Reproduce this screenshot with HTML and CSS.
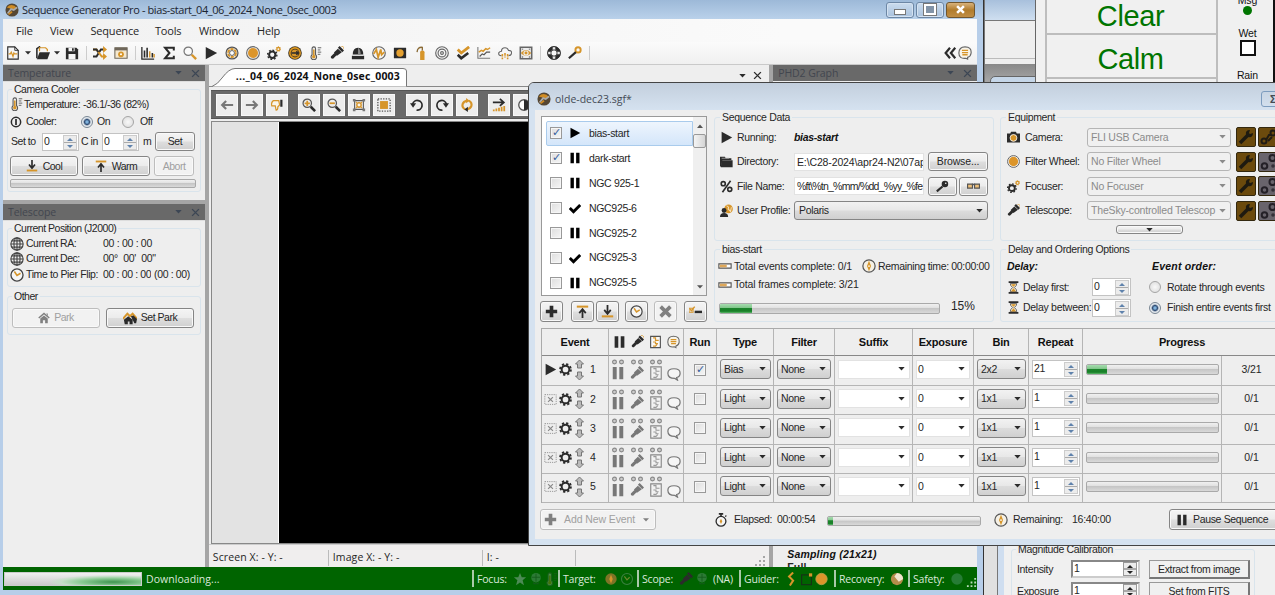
FILE: index.html
```html
<!DOCTYPE html>
<html lang="en">
<head>
<meta charset="utf-8">
<title>Sequence Generator Pro</title>
<link rel="stylesheet" href="styles.css">
</head>
<body>
<svg class="sprite" aria-hidden="true">
  <symbol id="new" viewBox="0 0 16 16"><path d="M2 1h8l4 4v10H2z" fill="#f6f6f6" stroke="currentColor" stroke-width="1.3"/><path d="M10 1v4h4" fill="none" stroke="currentColor"/><path d="M3 9h2l1-2 2 5 1-4 1 1h3" fill="none" stroke="#d6952a" stroke-width="1.4"/></symbol>
  <symbol id="open" viewBox="0 0 16 16"><path d="M1 14V3l3-2 1 2" fill="none" stroke="currentColor" stroke-width="1.8"/><path d="M4 6V2h7l2 2v2" fill="#f6f6f6" stroke="#d6952a" stroke-width="1.4"/><path d="M4 7h12l-3 8H1z" fill="currentColor"/></symbol>
  <symbol id="save" viewBox="0 0 16 16"><path d="M1 2h12l2 2v11H1z" fill="currentColor"/><path d="M4 2h7v4H4zM4 9h8v6H4z" fill="#f6f6f6"/><path d="M8 2.500h2v3H8z" fill="currentColor"/></symbol>
  <symbol id="shuffle" viewBox="0 0 16 16"><path d="M0 12h4l5-8h4" fill="none" stroke="currentColor" stroke-width="2.200"/><path d="M0 4h4l6 8h3" fill="none" stroke="#d6952a" stroke-width="2.200"/><path d="M0 4h4l2 3" fill="none" stroke="currentColor" stroke-width="2.200"/><path d="M11.500 0L16 4l-4.500 4z" fill="#d6952a"/><path d="M11.500 8l4.500 4-4.500 4z" fill="#d6952a"/></symbol>
  <symbol id="window" viewBox="0 0 16 16"><path d="M1 2h14v12H1z" fill="#f5e8ce" stroke="#6f675a" stroke-width="1.200"/><path d="M1 2h14v3H1z" fill="#6f675a"/><circle cx="8" cy="9.500" r="3.300" fill="#d6952a"/><circle cx="8" cy="9.500" r="1.200" fill="#fff"/></symbol>
  <symbol id="bars" viewBox="0 0 16 16"><path d="M1 1v14h14" fill="none" stroke="currentColor" stroke-width="1.500"/><path d="M4 13V5M7 13V2M13 13V8" stroke="currentColor" stroke-width="1.800"/><path d="M10 13V6M15 13V9" stroke="#d6952a" stroke-width="1.600"/></symbol>
  <symbol id="sigma" viewBox="0 0 16 16"><path d="M13.500 5V2H3.500l5 6-5 6h10v-3" fill="none" stroke="currentColor" stroke-width="2.300"/></symbol>
  <symbol id="search" viewBox="0 0 16 16"><circle cx="6" cy="6" r="4.800" fill="#fafafa" stroke="#777" stroke-width="1.400"/><path d="M10 10l5 5" stroke="#d6952a" stroke-width="2.700"/></symbol>
  <symbol id="play" viewBox="0 0 16 16"><path d="M2 1l13 7-13 7z" fill="currentColor"/></symbol>
  <symbol id="nut" viewBox="0 0 16 16"><circle cx="8" cy="8" r="6.800" fill="#eee" stroke="#555" stroke-width="1.400"/><circle cx="8" cy="8" r="4.500" fill="none" stroke="#d6952a" stroke-width="2.200" stroke-dasharray="3.700 1"/><circle cx="8" cy="8" r="2.800" fill="#fff" stroke="#555"/></symbol>
  <symbol id="ball" viewBox="0 0 16 16"><circle cx="8" cy="8" r="7.300" fill="#eee" stroke="#666" stroke-width="1.200"/><circle cx="8" cy="8" r="5.700" fill="#dc952a"/></symbol>
  <symbol id="gears" viewBox="0 0 16 16"><circle cx="6" cy="10" r="3.600" fill="none" stroke="currentColor" stroke-width="2.300"/><circle cx="6" cy="10" r="5.300" fill="none" stroke="currentColor" stroke-width="1.600" stroke-dasharray="2 2.100"/><circle cx="13" cy="3.500" r="1.800" fill="none" stroke="#d6952a" stroke-width="1.500"/><circle cx="13" cy="3.500" r="2.700" fill="none" stroke="#d6952a" stroke-dasharray="1.200 1"/></symbol>
  <symbol id="coin" viewBox="0 0 16 16"><circle cx="8" cy="8" r="7.800" fill="#3b3223"/><circle cx="8" cy="8" r="5.900" fill="none" stroke="#df991f" stroke-width="1.800"/><circle cx="8" cy="8" r="4" fill="#d6952a"/><path d="M4 8h8M9.500 6L12 8l-2.500 2" stroke="#2b2b2b" fill="none" stroke-width="1.500"/></symbol>
  <symbol id="thermo" viewBox="0 0 16 16"><path d="M3.500 10V3q0-2 2-2t2 2v7a3.200 3.200 0 1 1-4 0z" fill="#eee" stroke="#555" stroke-width="1.200"/><path d="M5.500 4v8" stroke="#d6952a" stroke-width="1.800"/><circle cx="5.500" cy="12.200" r="2" fill="#d6952a"/><path d="M10 2h4M10 4.500h3M10 7h4M10 9.500h3" stroke="#555"/></symbol>
  <symbol id="scope" viewBox="0 0 16 16"><path d="M1 12l4-4 2.500 2.500-4 4q-3 0-2.500-2.500zM4.500 7.500L9 3l4.500 4-5.500 4zM9 2l2-2 5 5-2 2z" fill="currentColor"/><path d="M12.500 0H14l2 2v1.500" stroke="#d6952a" fill="none"/></symbol>
  <symbol id="scopeg" viewBox="0 0 16 16"><path d="M1 12l4-4 2.500 2.500-4 4q-3 0-2.500-2.500zM4.500 7.500L9 3l4.500 4-5.500 4zM9 2l2-2 5 5-2 2z" fill="currentColor"/></symbol>
  <symbol id="dome" viewBox="0 0 16 16"><path d="M1 11h14v4H1zM2 10q0-8 6-8t6 8z" fill="currentColor"/><path d="M8 2q3 2 3 7H8z" fill="#888"/><path d="M2 10.400h12" stroke="#fff" stroke-width=".8"/></symbol>
  <symbol id="wave" viewBox="0 0 16 16"><circle cx="8" cy="8" r="7.200" fill="#f4f4f4" stroke="#666" stroke-width="1.300"/><path d="M2 9l3-5 2 9 3-9 1 6 3-3" fill="none" stroke="#d6952a" stroke-width="2"/></symbol>
  <symbol id="boxball" viewBox="0 0 16 16"><path d="M1 2h14v12H1z" fill="currentColor"/><circle cx="8" cy="8" r="4.200" fill="#e5a131"/></symbol>
  <symbol id="bottle" viewBox="0 0 16 16"><path d="M7 7q0-2 2-2h1q2 0 2 2v9H7z" fill="#d6952a"/><path d="M9.500 5V1.500Q4 1 3.500 7" fill="none" stroke="#8a6a35" stroke-width="1.500"/></symbol>
  <symbol id="target" viewBox="0 0 16 16"><g fill="none" stroke="#666" stroke-width="1.300"><circle cx="8" cy="8" r="7.200"/><circle cx="8" cy="8" r="4.500"/><circle cx="8" cy="8" r="1.600"/></g></symbol>
  <symbol id="checks" viewBox="0 0 16 16"><path d="M2 10l4 4 8-6" fill="none" stroke="currentColor" stroke-width="3"/><path d="M2 4l4 4 9-7" fill="none" stroke="#d6952a" stroke-width="3.200"/></symbol>
  <symbol id="chart" viewBox="0 0 16 16"><path d="M1 1v13h14" fill="none" stroke="#777" stroke-width="1.200"/><path d="M2 7l3-2 2 1 3-3 2 1 3-2" fill="none" stroke="#d6952a" stroke-width="1.700"/><path d="M3 12l3-3 2 1 3-3 4 0" fill="none" stroke="#555" stroke-width="1.400"/></symbol>
  <symbol id="cloud" viewBox="0 0 16 16"><path d="M4 11Q0 11 1 7.500 2 6 4 6q0-4 4-4 3 0 4 3 4 0 3.500 3.500Q15 11 12 11" fill="none" stroke="#666" stroke-width="1.300"/><path d="M5 9v6M8 8v5M11 9v6" stroke="#d6952a" stroke-width="1.800" stroke-dasharray="3 1"/></symbol>
  <symbol id="eye" viewBox="0 0 16 16"><path d="M1.500 1.500h13v13h-13z" fill="#eee" stroke="#666" stroke-width="1.800"/><path d="M2 8q6-7 12 0-6 7-12 0z" fill="#d6952a"/><circle cx="8" cy="8" r="3" fill="#eee"/><circle cx="8" cy="8" r="1.700" fill="#d6952a"/><path d="M4 3v1M12 3v1M4 12v1M12 12v1" stroke="#444" stroke-width="1.500"/></symbol>
  <symbol id="buoy" viewBox="0 0 16 16"><circle cx="8" cy="8" r="5.600" fill="#f8f8f8" stroke="currentColor" stroke-width="4"/><path d="M8 1v4M8 11v4M1 8h4M11 8h4" stroke="#e8e8e8" stroke-width="3"/><circle cx="8" cy="8" r="7.300" fill="none" stroke="currentColor"/><circle cx="8" cy="8" r="3.600" fill="none" stroke="currentColor"/></symbol>
  <symbol id="key" viewBox="0 0 16 16"><circle cx="11.500" cy="4.500" r="3" fill="none" stroke="#d6952a" stroke-width="2.200"/><path d="M9 7l-8 7" stroke="currentColor" stroke-width="2.500"/></symbol>
  <symbol id="chev" viewBox="0 0 16 16"><path d="M8 2L3 8l5 6M14 2L9 8l5 6" fill="none" stroke="currentColor" stroke-width="2.500"/></symbol>
  <symbol id="chat" viewBox="0 0 16 16"><path d="M9 14q-8 1-8-6 0-7 7-7 7.500 0 7 7-.5 4-4 5v2z" fill="#f8f4ea" stroke="#666" stroke-width="1.300"/><path d="M4.500 5h7M4.500 7.500h7M5 10h6" stroke="#d6952a" stroke-width="1.500"/></symbol>
  <symbol id="left" viewBox="0 0 16 16"><path d="M15 8H3M7 3.500L2.500 8 7 12.500" fill="none" stroke="#777" stroke-width="2.500"/></symbol>
  <symbol id="right" viewBox="0 0 16 16"><path d="M1 8h12M9 3.500L13.500 8 9 12.500" fill="none" stroke="#777" stroke-width="2.500"/></symbol>
  <symbol id="thumb" viewBox="0 0 16 16"><path d="M10 3H4Q1 5 2 9h4l1 5q2 0 2-4l2-2z" fill="#f8f4ea" stroke="#d6952a" stroke-width="1.400"/><path d="M13 2v8" stroke="currentColor" stroke-width="2.500"/></symbol>
  <symbol id="zin" viewBox="0 0 16 16"><circle cx="6" cy="6" r="4.800" fill="none" stroke="#555" stroke-width="1.400"/><path d="M3 6h6M6 3v6" stroke="#d6952a" stroke-width="2"/><path d="M10 10l5 5" stroke="currentColor" stroke-width="3"/></symbol>
  <symbol id="zout" viewBox="0 0 16 16"><circle cx="6" cy="6" r="4.800" fill="none" stroke="#555" stroke-width="1.400"/><path d="M3 6h6" stroke="#d6952a" stroke-width="2"/><path d="M10 10l5 5" stroke="currentColor" stroke-width="3"/></symbol>
  <symbol id="fit" viewBox="0 0 16 16"><path d="M3 3h10v10H3z" fill="none" stroke="#555" stroke-width="1.200"/><path d="M1 1h3v3H1zM12 1h3v3h-3zM1 12h3v3H1zM12 12h3v3h-3z" fill="#777"/><circle cx="8" cy="8" r="2.500" fill="#f8f4ea" stroke="#d6952a" stroke-width="1.600"/><path d="M4.500 4.500l1 1M11.500 4.500l-1 1M4.500 11.500l1-1M11.500 11.500l-1-1" stroke="#d6952a" stroke-width="1.500"/></symbol>
  <symbol id="sel" viewBox="0 0 16 16"><path d="M1 1h14v14H1z" fill="none" stroke="#555" stroke-width="1.500" stroke-dasharray="1.500 1.500"/><path d="M3.500 3.500h9v9h-9z" fill="#d6952a"/></symbol>
  <symbol id="ccw" viewBox="0 0 16 16"><path d="M3 7a5.500 5.500 0 1 1 4.500 6.800" fill="none" stroke="currentColor" stroke-width="2"/><path d="M0 6h7l-3.500 5z" fill="currentColor"/></symbol>
  <symbol id="cw" viewBox="0 0 16 16"><path d="M13 7a5.500 5.500 0 1 0-4.500 6.800" fill="none" stroke="currentColor" stroke-width="2"/><path d="M16 6H9l3.500 5z" fill="currentColor"/></symbol>
  <symbol id="sync" viewBox="0 0 16 16"><path d="M6 13Q2 11 3 7q1-3 5-4" fill="none" stroke="#d6952a" stroke-width="2.500"/><path d="M7 0l4 3-4 3z" fill="#d6952a"/><path d="M10 3q4 2 3 6-1 3-5 4" fill="none" stroke="#d6952a" stroke-width="2.500"/><path d="M9 10v6l-4-3z" fill="currentColor"/></symbol>
  <symbol id="arrbars" viewBox="0 0 16 16"><path d="M1 5h12M9 1l4.500 4L9 9" fill="none" stroke="currentColor" stroke-width="2"/><path d="M2 15v-2M5 15v-3M8 15v-4M11 15v-5M14 15V9" stroke="#d6952a" stroke-width="2"/></symbol>
  <symbol id="half" viewBox="0 0 16 16"><circle cx="8" cy="8" r="6" fill="#fff" stroke="#555" stroke-width="1.500"/><path d="M8 2v12A6 6 0 0 0 8 2" fill="currentColor"/></symbol>
  <symbol id="power" viewBox="0 0 16 16"><circle cx="8" cy="8" r="6.200" fill="#eee" stroke="currentColor" stroke-width="2"/><path d="M8 4v8" stroke="currentColor" stroke-width="2.300"/></symbol>
  <symbol id="down" viewBox="0 0 16 16"><path d="M8 0v10M4 6l4 5 4-5" fill="none" stroke="currentColor" stroke-width="2.200"/><path d="M1 14h14" stroke="#d6952a" stroke-width="2.500"/></symbol>
  <symbol id="up" viewBox="0 0 16 16"><path d="M8 16V5M4 10l4-5 4 5" fill="none" stroke="currentColor" stroke-width="2.200"/><path d="M1 2h14" stroke="#d6952a" stroke-width="2.500"/></symbol>
  <symbol id="globe" viewBox="0 0 16 16"><g fill="none" stroke="#444" stroke-width="1.300"><circle cx="8" cy="8" r="7"/><ellipse cx="8" cy="8" rx="3.500" ry="7"/><path d="M8 1v14M1 8h14M2 4.500h12M2 11.500h12"/></g></symbol>
  <symbol id="clock" viewBox="0 0 16 16"><circle cx="8" cy="8" r="6.900" fill="#f6f6f6" stroke="#444" stroke-width="1.500"/><path d="M5 4l3 4.500L12 6" fill="none" stroke="#d6952a" stroke-width="1.800"/></symbol>
  <symbol id="home" viewBox="0 0 16 16"><path d="M1 8l7-6 7 6" fill="none" stroke="currentColor" stroke-width="2"/><path d="M3 8.500l5-4 5 4V15H9.500v-4h-3v4H3zM11 2h2v4z" fill="currentColor"/></symbol>
  <symbol id="homes" viewBox="0 0 16 16"><path d="M0 9l5-6 3 3 3-3 5 6" fill="none" stroke="#d6952a" stroke-width="2.200"/><path d="M1 10l5-4 5 4v5H7.500v-3h-2v3H2zM9 6l3-1 4 4-1 5h-2z" fill="currentColor"/></symbol>
  <symbol id="pause" viewBox="0 0 16 16"><path d="M2 1h4.500v14H2zM9.500 1H14v14H9.500z" fill="currentColor"/></symbol>
  <symbol id="check" viewBox="0 0 16 16"><path d="M1 8l5 5 9-9" fill="none" stroke="currentColor" stroke-width="4"/></symbol>
  <symbol id="plus" viewBox="0 0 16 16"><path d="M8 1v14M1 8h14" stroke="currentColor" stroke-width="4.500"/></symbol>
  <symbol id="cross" viewBox="0 0 16 16"><path d="M2 2l12 12M14 2L2 14" stroke="currentColor" stroke-width="4.500"/></symbol>
  <symbol id="thinx" viewBox="0 0 16 16"><path d="M2 2l12 12M14 2L2 14" stroke="currentColor" stroke-width="2.500"/></symbol>
  <symbol id="chkminus" viewBox="0 0 16 16"><path d="M0 4h5v5H0z" fill="none" stroke="#d6952a" stroke-width="1.300"/><path d="M1 5l2 2 4-5" fill="none" stroke="#d6952a" stroke-width="1.700"/><path d="M7 8.500h9" stroke="currentColor" stroke-width="3"/></symbol>
  <symbol id="folder" viewBox="0 0 16 16"><path d="M0 2h6l1 2h7v2H3L1.500 14H0z" fill="currentColor"/><path d="M2 6.500h13.500V15H1z" fill="currentColor"/><path d="M2 4h9" stroke="#aaa"/></symbol>
  <symbol id="percent" viewBox="0 0 16 16"><g fill="none" stroke="currentColor" stroke-width="2"><circle cx="4" cy="4.500" r="2.500"/><circle cx="12" cy="11.500" r="2.500"/><path d="M13 1L3 15"/></g></symbol>
  <symbol id="user" viewBox="0 0 16 16"><circle cx="10.500" cy="6" r="5.300" fill="#d6952a"/><path d="M8 2q4 2 2 4l3 3 1-5" fill="none" stroke="#f6dfb5" stroke-width="1.300"/><circle cx="5" cy="8" r="3" fill="currentColor"/><path d="M0 16q0-5 5-5t5 5z" fill="currentColor"/></symbol>
  <symbol id="pbar" viewBox="0 0 16 16"><path d="M1 5.500h14v5H1z" fill="#fff" stroke="#555" stroke-width="1.300"/><path d="M2 6.500h8v3H2z" fill="#dfa85a"/></symbol>
  <symbol id="compass" viewBox="0 0 16 16"><circle cx="8" cy="8" r="7" fill="#f5f0e5" stroke="#555" stroke-width="1.400"/><path d="M8 2l2.300 6L8 14 5.700 8z" fill="#d6952a"/><circle cx="8" cy="8" r="1" fill="#fff"/></symbol>
  <symbol id="camera" viewBox="0 0 16 16"><path d="M0 3h4l1-2h6l1 2h4v11H0z" fill="currentColor"/><circle cx="8" cy="8.500" r="4.200" fill="#d6952a" stroke="#fff"/></symbol>
  <symbol id="wrench" viewBox="0 0 16 16"><path d="M2 14l8-8" stroke="#1e1a10" stroke-width="3.500"/><path d="M15 4l-3 1-1-1 1-3Q7 1 8 6l2 2q5 1 5-4z" fill="#1e1a10"/></symbol>
  <symbol id="link" viewBox="0 0 16 16"><g fill="none" stroke="#242027" stroke-width="2"><circle cx="4.500" cy="12" r="2.800"/><circle cx="12.500" cy="4" r="3"/></g><circle cx="13" cy="12" r="1.800" fill="#343038"/></symbol>
  <symbol id="linked" viewBox="0 0 16 16"><g fill="none" stroke="#201b12" stroke-width="2"><circle cx="4" cy="12" r="2.500"/><circle cx="13" cy="4" r="2.500"/><path d="M6 11l3-5 3 0M8 12l4-4"/></g></symbol>
  <symbol id="hour" viewBox="0 0 16 16"><path d="M2 1.500h12M2 14.500h12" stroke="currentColor" stroke-width="2.200"/><path d="M4 3q0 3 3 5-3 2-3 5h8q0-3-3-5 3-2 3-5z" fill="#f6e6c7" stroke="#666" stroke-width="1.200"/><path d="M5 4h6L8 7zM8 9l3 4H5z" fill="#d6952a"/></symbol>
  <symbol id="script" viewBox="0 0 16 16"><path d="M2 1h12v14H2z" fill="#f8f8f8" stroke="#555" stroke-width="1.400"/><path d="M5 3h3v3h4M5 8h3v2h3M5 13h3l2-2" fill="none" stroke="#d6952a" stroke-width="1.500"/></symbol>
  <symbol id="scriptg" viewBox="0 0 16 16"><path d="M2 1h12v14H2z" fill="#f2f2f2" stroke="#888" stroke-width="1.300"/><path d="M5 3h3v3h4M5 8h3v2h3M5 13h3l2-2" fill="none" stroke="#999" stroke-width="1.200"/></symbol>
  <symbol id="bubble" viewBox="0 0 16 16"><path d="M9 13Q1 13 1 7q0-5 7-5t7 5q0 4-4 5l1 3z" fill="#f6f6f6" stroke="#777" stroke-width="1.400"/></symbol>
  <symbol id="gear" viewBox="0 0 16 16"><circle cx="8" cy="8" r="4.700" fill="none" stroke="currentColor" stroke-width="2.400"/><circle cx="8" cy="8" r="6.700" fill="none" stroke="currentColor" stroke-width="2.200" stroke-dasharray="2.760 2.500"/></symbol>
  <symbol id="arrows" viewBox="0 0 10 22"><path d="M5 1l4 4H7v4H3V5H1zM5 21l-4-4h2v-4h4v4h2z" fill="#bbb" stroke="#777" stroke-width="1"/></symbol>
  <symbol id="dotx" viewBox="0 0 16 16"><path d="M1 2h14v12H1z" fill="none" stroke="#888" stroke-dasharray="1.500 1.200"/><path d="M5 5l6 6M11 5l-6 6" stroke="#888" stroke-width="1.400"/></symbol>
  <symbol id="dots" viewBox="0 0 16 6"><g fill="#ccc" stroke="#888" stroke-width="1.300"><circle cx="4" cy="3" r="2.200"/><circle cx="12" cy="3" r="2.200"/></g></symbol>
  <symbol id="stopw" viewBox="0 0 16 16"><circle cx="8" cy="9.500" r="5.600" fill="#f6f6f6" stroke="currentColor" stroke-width="1.500"/><path d="M5.500 1h5M8 1v3M13 3l1 1" stroke="currentColor" stroke-width="1.800"/><path d="M8 6.500l1.500 3L8 12.500 6.500 9.500z" fill="#d6952a"/></symbol>
  <symbol id="key2" viewBox="0 0 16 16"><circle cx="11" cy="5" r="4" fill="currentColor"/><circle cx="12" cy="4" r="1" fill="#eee"/><path d="M8 8l-7 6" stroke="currentColor" stroke-width="2.700"/></symbol>
  <symbol id="glasses" viewBox="0 0 16 16"><path d="M.7 5h6v5h-6zM9.300 5h6v5h-6z" fill="#edbf79" stroke="#555" stroke-width="1.400"/><path d="M6 5.500h4" stroke="#555" stroke-width="2"/></symbol>
  <symbol id="app" viewBox="0 0 16 16"><circle cx="8" cy="8" r="7.500" fill="#554734"/><path d="M2 5Q8-1 14 6L9 7z" fill="#d18c23"/><path d="M3 12l4-5 3 1 4-3" fill="none" stroke="#aaa" stroke-width="2"/><path d="M4 13l4-3" stroke="#d18c23" stroke-width="2"/></symbol>
  <symbol id="star" viewBox="0 0 16 16"><path d="M8 1l2 5h5l-4 3.500 1.500 5.500L8 12l-4.500 3L5 9.500 1 6h5z" fill="#4c8b55"/></symbol>
  <symbol id="bulb" viewBox="0 0 16 16"><circle cx="8" cy="6.500" r="5.500" fill="#3b8347"/><path d="M5 11q3 4 6 0v3H5z" fill="#1c5a26"/><path d="M8 2v9M3 6h10" stroke="#1c5a26"/></symbol>
  <symbol id="tri" viewBox="0 0 8 5"><path d="M0 0h8L4 4.500z" fill="currentColor"/></symbol>
  <symbol id="grip" viewBox="0 0 12 12"><path d="M9 1h2v2H9zM9 5h2v2H9zM9 9h2v2H9zM5 5h2v2H5zM5 9h2v2H5zM1 9h2v2H1z" fill="currentColor"/></symbol>
  <symbol id="tab" viewBox="0 0 196 20"><path d="M0 19.500Q6 17 10 11Q17 1.500 23 1.500H191Q194.500 1.500 194.500 4V19.500" fill="#fff" stroke="#777"/></symbol>
</svg>

<div class="desktop">

  <section class="win back-win">
    <div class="back-title"></div><div class="back-body"></div><div class="back-line"></div><div class="back-gray"><div class="back-sub"></div></div>
  </section>

  <section class="win sky">
    <div class="sky-main"><div class="sky-cell">Clear</div><div class="sky-cell">Calm</div><div class="sky-cell"></div></div>
    <div class="sky-side"><span>Msg</span><i class="led"></i><span class="wet">Wet</span><i class="box"></i><span class="rain">Rain</span></div>
  </section>

  <section class="win mag">
    <div class="group mag-group"><div class="legend">Magnitude Calibration</div>
      <div class="mag-row"><span>Intensity</span><div class="spin old">1<b></b></div><div class="oldbtn">Extract from image</div></div>
      <div class="mag-row"><span>Exposure</span><div class="spin old">1<b></b></div><div class="oldbtn">Set from FITS</div></div>
    </div>
  </section>

  <section class="win main-win">
    <header class="title"><svg class="i14"><use href="#app"/></svg><span class="title-text">Sequence Generator Pro - bias-start_04_06_2024_None_0sec_0003</span>
      <div class="winbtns"><b class="min"></b><b class="max"></b><b class="close"><svg><use href="#cross"/></svg></b></div>
    </header>
    <nav class="menu"><span class="m1">File</span><span class="m2">View</span><span class="m3">Sequence</span><span class="m4">Tools</span><span class="m5">Window</span><span class="m6">Help</span></nav>
    <div class="tools">
      <svg><use href="#new"/></svg><svg class="dd"><use href="#tri"/></svg><svg><use href="#open"/></svg><svg class="dd"><use href="#tri"/></svg><svg><use href="#save"/></svg><i class="sep"></i>
      <svg><use href="#shuffle"/></svg><svg><use href="#window"/></svg><i class="sep"></i>
      <svg><use href="#bars"/></svg><svg><use href="#sigma"/></svg><svg><use href="#search"/></svg><svg><use href="#play"/></svg><svg><use href="#nut"/></svg><svg><use href="#ball"/></svg><svg><use href="#gears"/></svg><svg><use href="#coin"/></svg><svg><use href="#thermo"/></svg><svg><use href="#scope"/></svg><svg><use href="#dome"/></svg><svg><use href="#wave"/></svg><svg><use href="#boxball"/></svg><svg><use href="#bottle"/></svg><svg><use href="#target"/></svg><svg><use href="#checks"/></svg><svg><use href="#chart"/></svg><svg><use href="#cloud"/></svg><svg><use href="#eye"/></svg><i class="sep"></i>
      <svg><use href="#buoy"/></svg><svg><use href="#key"/></svg><i class="sep"></i>
      <div class="tools-end"><svg><use href="#chev"/></svg><svg><use href="#chat"/></svg></div>
    </div>
    <div class="work">
      <aside class="side">
        <div class="dock"><span>Temperature</span><svg class="dd"><use href="#tri"/></svg><svg class="dx"><use href="#thinx"/></svg></div>
        <div class="pane pane1">
          <div class="group g-cool"><div class="legend">Camera Cooler</div>
            <div class="srow r1"><svg class="i14"><use href="#thermo"/></svg><span class="cap">Temperature:</span><span>-36.1/-36 (82%)</span></div>
            <div class="srow r2"><svg class="i12"><use href="#power"/></svg><span class="cap cooler">Cooler:</span><i class="radio on"></i><span class="on-t">On</span><i class="radio"></i><span class="off-t">Off</span></div>
            <div class="srow r3"><span class="setto">Set to</span><div class="spin w37">0<b></b></div><span class="cin">C in</span><div class="spin w37">0<b></b></div><span class="mm">m</span><div class="btn set">Set</div></div>
            <div class="srow r4"><div class="btn w68"><svg class="i12"><use href="#down"/></svg>Cool</div><div class="btn w68"><svg class="i12"><use href="#up"/></svg>Warm</div><div class="btn w40 off">Abort</div></div>
            <div class="bar sidebar"></div>
          </div>
        </div>
        <div class="dock"><span>Telescope</span><svg class="dd"><use href="#tri"/></svg><svg class="dx"><use href="#thinx"/></svg></div>
        <div class="pane pane2">
          <div class="group g-pos"><div class="legend">Current Position (J2000)</div>
            <div class="srow p1"><svg class="i14"><use href="#globe"/></svg><span class="pc">Current RA:</span><span>00 : 00 : 00</span></div>
            <div class="srow p1"><svg class="i14"><use href="#globe"/></svg><span class="pc">Current Dec:</span><span>00°&nbsp; 00'&nbsp; 00"</span></div>
            <div class="srow p2"><svg class="i14"><use href="#clock"/></svg><span class="pc">Time to Pier Flip:</span><span class="flip">00 : 00 : 00</span><span>(00 : 00)</span></div>
          </div>
          <div class="group g-other"><div class="legend">Other</div>
            <div class="srow r5"><div class="btn w88 off"><svg class="i12"><use href="#home"/></svg>Park</div><div class="btn w88"><svg class="i14"><use href="#homes"/></svg>Set Park</div></div>
          </div>
        </div>
      </aside>
      <main class="center">
        <div class="tabs"><div class="tab"><svg class="tabshape"><use href="#tab"/></svg><span>..._04_06_2024_None_0sec_0003</span></div><div class="tab-end"><svg class="dd"><use href="#tri"/></svg><svg class="dx"><use href="#thinx"/></svg></div></div>
        <div class="imgtools">
          <b><svg><use href="#left"/></svg></b><b><svg><use href="#right"/></svg></b><b class="gap"><svg><use href="#thumb"/></svg></b>
          <b><svg><use href="#zin"/></svg></b><b><svg><use href="#zout"/></svg></b><b><svg><use href="#fit"/></svg></b><b class="gap"><svg><use href="#sel"/></svg></b>
          <b><svg><use href="#ccw"/></svg></b><b><svg><use href="#cw"/></svg></b><b class="gap"><svg><use href="#sync"/></svg></b>
          <b><svg><use href="#arrbars"/></svg></b><b><svg><use href="#half"/></svg></b>
        </div>
        <div class="viewer"><div class="image"></div></div>
        <div class="coords"><span class="c1">Screen X: - Y: -</span><span class="c2">Image X: - Y: -</span><span class="c3">I: -</span><svg class="grip"><use href="#grip"/></svg></div>
      </main>
      <aside class="phd"><div class="dock"><span>PHD2 Graph</span><svg class="dd"><use href="#tri"/></svg><svg class="dx"><use href="#thinx"/></svg></div>
        <div class="phd-body"><div class="sampling">Sampling (21x21)</div><div class="full">Full</div></div></aside>
    </div>
    <footer class="green"><div class="gload"></div><span class="dl">Downloading...</span>
      <div class="cell c-focus"><span>Focus:</span><svg><use href="#star"/></svg><svg class="semi"><use href="#bulb"/></svg><svg class="dim"><use href="#thermo"/></svg></div>
      <div class="cell c-target"><span>Target:</span><svg viewBox="0 0 16 16"><circle cx="8" cy="8" r="6.500" fill="#7d7426"/><path d="M8 3l2 5-2 5-2-5z" fill="#d6952a"/></svg><svg viewBox="0 0 16 16"><circle cx="8" cy="8" r="6.300" fill="none" stroke="#3a7f3f" stroke-width="1.300"/><path d="M5 5l3 4 3-3" fill="none" stroke="#6b8a2e" stroke-width="1.300"/></svg></div>
      <div class="cell c-scope"><span>Scope:</span><svg><use href="#scopeg"/></svg><svg class="semi"><use href="#bulb"/></svg><em>(NA)</em></div>
      <div class="cell c-guider"><span>Guider:</span><svg viewBox="0 0 16 16"><path d="M10 0L5 5l5 5-4 6" fill="none" stroke="#d6952a" stroke-width="2.500"/></svg><svg viewBox="0 0 16 16"><path d="M2 3h12v12H2z" fill="none" stroke="#153315" stroke-width="1.500"/><path d="M11 1h4v4h-4z" fill="#d6952a"/></svg><svg viewBox="0 0 16 16"><circle cx="8" cy="8" r="7" fill="#dc952a" stroke="#b7a14c"/></svg></div>
      <div class="cell c-rec"><span>Recovery:</span><svg viewBox="0 0 16 16"><circle cx="8" cy="8" r="7" fill="#b48d4b"/><path d="M8 1a7 7 0 0 1 7 7l-5 3-5-6z" fill="#efe5cf"/></svg></div>
      <div class="cell c-safe"><span>Safety:</span><svg viewBox="0 0 16 16"><circle cx="8" cy="8" r="6.500" fill="#267c35"/></svg><svg class="grip"><use href="#grip"/></svg></div>
    </footer>
  </section>

  <section class="win dialog">
    <header class="dtitle"><svg class="i14"><use href="#app"/></svg><span>olde-dec23.sgf*</span><b class="dbtn">Σ</b></header>
    <div class="dbody">
      <div class="top">
        <div class="listcol">
          <div class="list"><div class="items" id="targets"></div><div class="scroll"><svg class="sup"><use href="#tri"/></svg><i></i><svg class="sdown"><use href="#tri"/></svg></div></div>
          <div class="lbtns"><div class="btn b1"><svg><use href="#plus"/></svg></div><div class="btn b2"><svg><use href="#up"/></svg></div><div class="btn b3"><svg><use href="#down"/></svg></div><div class="btn b4"><svg><use href="#clock"/></svg></div><div class="btn b5 off"><svg><use href="#cross"/></svg></div><div class="btn b6"><svg><use href="#chkminus"/></svg></div></div>
        </div>
        <div class="midcol">
          <div class="group g-top"><div class="legend">Sequence Data</div>
            <div class="drow"><svg><use href="#play"/></svg><span class="dl1">Running:</span><strong class="ital">bias-start</strong></div>
            <div class="drow"><svg><use href="#folder"/></svg><span class="dl1">Directory:</span><div class="field">E:\C28-2024\apr24-N2\07ap</div><div class="btn browse">Browse...</div></div>
            <div class="drow"><svg><use href="#percent"/></svg><span class="dl1">File Name:</span><div class="field ff">%ft\%tn_%mm/%dd_%yy_%fe</div><div class="btn half"><svg><use href="#key2"/></svg></div><div class="btn half"><svg><use href="#glasses"/></svg></div></div>
            <div class="drow"><svg><use href="#user"/></svg><span class="dl1">User Profile:</span><div class="combo polaris"><span>Polaris</span><svg class="dd"><use href="#tri"/></svg></div></div>
          </div>
          <div class="group g-bot"><div class="legend">bias-start</div>
            <div class="trow"><svg><use href="#pbar"/></svg><span class="te">Total events complete: 0/1</span><svg class="rem"><use href="#compass"/></svg><span class="rt">Remaining time: 00:00:00</span></div>
            <div class="trow t2"><svg><use href="#pbar"/></svg><span class="te">Total frames complete: 3/21</span></div>
            <div class="prow"><div class="bar big"><i style="width:14.5%"></i></div><span class="pct">15%</span></div>
          </div>
        </div>
        <div class="rightcol">
          <div class="group g-top"><div class="legend">Equipment</div>
            <div class="erow"><svg><use href="#camera"/></svg><span class="el">Camera:</span><div class="combo dis"><span>FLI USB Camera</span><svg class="dd"><use href="#tri"/></svg></div><b class="tile"><svg><use href="#wrench"/></svg></b><b class="tile"><svg><use href="#linked"/></svg></b></div>
            <div class="erow"><svg><use href="#ball"/></svg><span class="el">Filter Wheel:</span><div class="combo dis"><span>No Filter Wheel</span><svg class="dd"><use href="#tri"/></svg></div><b class="tile"><svg><use href="#wrench"/></svg></b><b class="tile gr"><svg><use href="#link"/></svg></b></div>
            <div class="erow"><svg><use href="#gears"/></svg><span class="el">Focuser:</span><div class="combo dis"><span>No Focuser</span><svg class="dd"><use href="#tri"/></svg></div><b class="tile"><svg><use href="#wrench"/></svg></b><b class="tile gr"><svg><use href="#link"/></svg></b></div>
            <div class="erow"><svg><use href="#scope"/></svg><span class="el">Telescope:</span><div class="combo dis"><span>TheSky-controlled Telescop</span><svg class="dd"><use href="#tri"/></svg></div><b class="tile"><svg><use href="#wrench"/></svg></b><b class="tile gr"><svg><use href="#link"/></svg></b></div>
            <div class="btn expand"><svg class="dd"><use href="#tri"/></svg></div>
          </div>
          <div class="group g-bot"><div class="legend">Delay and Ordering Options</div>
            <div class="orow o1"><strong class="ital od">Delay:</strong><strong class="ital oe">Event order:</strong></div>
            <div class="orow"><svg><use href="#hour"/></svg><span class="ol">Delay first:</span><div class="spin w39">0<b></b></div><i class="radio"></i><span class="ot">Rotate through events</span></div>
            <div class="orow"><svg><use href="#hour"/></svg><span class="ol">Delay between:</span><div class="spin w39">0<b></b></div><i class="radio on"></i><span class="ot">Finish entire events first</span></div>
          </div>
        </div>
      </div>
      <div class="grid" id="events">
        <div class="hd">Event</div><div class="hd hicons"><svg><use href="#pause"/></svg><svg><use href="#scope"/></svg><svg><use href="#script"/></svg><svg><use href="#chat"/></svg></div><div class="hd">Run</div><div class="hd">Type</div><div class="hd">Filter</div><div class="hd">Suffix</div><div class="hd">Exposure</div><div class="hd">Bin</div><div class="hd">Repeat</div><div class="hd prog">Progress</div>
      </div>
      <div class="foot">
        <div class="btn add off"><svg><use href="#plus"/></svg><span>Add New Event</span><svg class="dd"><use href="#tri"/></svg></div>
        <svg class="sw"><use href="#stopw"/></svg><span class="el1">Elapsed:</span><span class="el2">00:00:54</span><div class="bar fbar"><i style="width:3%"></i></div>
        <svg class="cp"><use href="#compass"/></svg><span class="re1">Remaining:</span><span class="re2">16:40:00</span>
        <div class="btn psq"><svg><use href="#pause"/></svg><span>Pause Sequence</span></div>
      </div>
    </div>
  </section>
</div>
<script src="app.js"></script>
</body>
</html>
```
FILE: styles.css
```css
* { box-sizing: border-box; }
body { margin: 0; font: 10.500px/13px "Liberation Sans", Arial, sans-serif; letter-spacing: -.34px; color: #262626; }
svg { flex: none; color: #2b2b2b; display: block; }
b, i, em { font-style: normal; font-weight: normal; }
span { white-space: nowrap; }
.sprite { position: absolute; width: 0; height: 0; }
.desktop { position: relative; width: 1275px; height: 595px; overflow: hidden; background: #b5c9df; }
.win { position: absolute; }
.i14 { width: 14px; height: 14px; }
.i12 { width: 12px; height: 12px; }
.dd { width: 7px; height: 4px; }
.dx { width: 9px; height: 9px; }

/* windows behind */
.back-win { left: 984px; top: 0; width: 60px; height: 90px; border-left: 1px solid #777; }
.back-title { height: 20px; background: linear-gradient(#a8c0dc, #cfdff0); }
.back-body { height: 38px; background: #eee; border-top: 1px solid #777; }
.back-line { height: 6px; background: #eee; border-top: 1px solid #bbb; }
.back-gray { height: 26px; background: linear-gradient(#888, #b5b5b5); padding: 12px 0 0 5px; }
.back-sub { height: 14px; background: #c5d6e8; border: 1px solid #666; border-radius: 5px 0 0 0; }
.sky { left: 1035px; top: 0; width: 240px; height: 90px; background: #f0f0f0; border-left: 1px solid #666; border-right: 2px solid #111; display: flex; padding-left: 9px; }
.sky-main { width: 173px; }
.sky-cell { height: 44px; border: 1px solid #bdbdbd; border-width: 0 2px 2px; text-align: center; font-size: 29px; line-height: 48px; letter-spacing: -.4px; color: #007500; padding-right: 2px; }
.sky-cell:first-child { height: 35px; line-height: 33px; }
.sky-side { flex: 1; display: flex; flex-direction: column; align-items: center; color: #111; padding-left: 4px; letter-spacing: -.1px; }
.sky-side > span:first-child { margin-top: -6px; height: 12px; }
.led { width: 9px; height: 9px; border-radius: 50%; background: #007500; }
.wet { margin-top: 12px; }
.box { width: 16px; height: 16px; border: 2px solid #111; background: #fff; }
.rain { margin-top: 13px; }
.mag { left: 984px; top: 540px; width: 291px; height: 55px; background: #f0f0f0; border-left: 13px solid #e0e0e0; box-shadow: inset 1px 0 #777, inset 7px 0 #cfdef0; padding: 9px 0 0 14px; }
.mag-group { width: 244px; height: 80px; border-color: #bbb; }
.mag-row { display: flex; height: 22px; align-items: center; padding-left: 5px; }
.mag-group .legend + .mag-row { margin-top: 2px; }
.mag-row span { width: 54px; }
.oldbtn { width: 101px; height: 19px; margin-left: 9px; border: 1px solid #999; border-right: 2px solid #777; border-bottom: 2px solid #777; text-align: center; line-height: 16px; background: #f0f0f0; }

/* shared controls */
.group { border: 1px solid #d9e4ec; border-radius: 3px; }
.legend { width: fit-content; height: 13px; margin: -7px 0 0 4px; padding: 0 2px; background: #eee; white-space: nowrap; }
.btn { display: flex; align-items: center; justify-content: center; white-space: nowrap; height: 20px; border: 1px solid #858585; border-radius: 3px; background: linear-gradient(#f4f4f4, #ececec 48%, #dedede 52%, #d0d0d0); box-shadow: inset 0 0 0 1px #f9f9f9; }
.btn.off { color: #a0a0a0; border-color: #bdbdbd; background: #f2f2f2; }
.off svg { color: #808080; }
.spin { display: flex; justify-content: space-between; background: #fff; border: 1px solid #c3c3c3; height: 18px; padding: 1px 0 0 1px; line-height: 12px; }
.spin b { width: 14px; height: 15px; margin-right: 1px; background: linear-gradient(#ececec 45%, #aaa 45%, #aaa 55%, #ececec 55%); border: 1px solid #ccc; position: relative; }
.spin b::before, .spin b::after { content: ""; position: absolute; left: 3px; border: 3px solid transparent; }
.spin b::before { top: 2px; border-bottom-color: #5f82ac; border-top: 0; }
.spin b::after { bottom: 1px; border-top-color: #5f82ac; border-bottom: 0; }
.spin.old { width: 69px; height: 18px; border: 2px solid #888; border-right-color: #ccc; border-bottom-color: #ccc; padding-top: 0; }
.old b { border-color: #999; height: 14px; }
.spin.old b::before { border-bottom-color: #222; }
.spin.old b::after { border-top-color: #222; }
.radio { width: 12px; height: 12px; flex: none; border: 1px solid #a5a5a5; border-radius: 50%; background: radial-gradient(#f9f9f9, #d9d9d9); }
.radio.on { border-color: #7a8794; background: radial-gradient(circle, #7fb2dd 0 1px, #2f4c73 2.500px, #e4e9ee 4px); }
.bar { height: 10px; border: 1px solid #a9a9a9; border-radius: 2px; background: linear-gradient(#f0f0f0, #e2e2e2 40%, #c6c6c6 50%, #d9d9d9); overflow: hidden; }
.bar i { display: block; height: 100%; background: linear-gradient(#a7ddb0, #83c78d 40%, #1c842c 45%, #188028 80%, #5db96a); }
.combo { display: flex; align-items: center; justify-content: space-between; height: 19px; padding: 0 4px; border: 1px solid #858585; border-radius: 3px; background: linear-gradient(#f2f2f2, #e8e8e8 48%, #dcdcdc 52%, #d0d0d0); }
.combo.dis { background: #f0f0f0; border-color: #b5b5b5; color: #8b8b8b; }
.combo.dis svg { color: #8b8b8b; }
.ital { font-style: italic; white-space: nowrap; color: #111; }
.dock { height: 16px; display: flex; align-items: center; padding: 0 5px 0 5px; background: #696969; color: #42464f; font: 10.500px/15px "Open Sans", sans-serif; letter-spacing: -.1px; }
.dock svg { color: #3c4654; }
.dock .dd { margin: 0 9px 0 auto; }

/* main window */
.main-win { left: 0; top: 0; width: 984px; height: 595px; padding: 0 6px 5px 3px; background: #b7cee9; border-right: 1px solid #333; display: flex; flex-direction: column; }
.title { height: 19px; margin: 0 -6px 0 -3px; padding: 0 8px 0 5px; display: flex; align-items: center; background: linear-gradient(#9db9d8, #b9d1ea); font: 11px/16px "Open Sans", sans-serif; color: #1b2430; }
.title-text { margin-left: 3px; letter-spacing: -.4px; }
.winbtns { margin-left: auto; display: flex; gap: 2px; }
.winbtns b { width: 28px; height: 16px; border: 1px solid #6d87a5; border-radius: 3px; background: linear-gradient(#cbdcee, #a9c2de); display: flex; align-items: center; justify-content: center; box-shadow: inset 0 0 0 1px #d4e2f1; }
.winbtns .close { width: 29px; background: linear-gradient(#d8b27b, #b17c2c 50%, #c08e44); border-color: #71562d; box-shadow: none; }
.close svg { width: 9px; height: 9px; color: #fff; }
.min::before { content: ""; width: 10px; height: 4px; background: #fff; border: 1px solid #777; margin-top: 5px; }
.max::before { content: ""; width: 8px; height: 7px; background: #8294a8; border: 2px solid #fff; box-shadow: 0 0 0 1px #777; }
.menu { height: 23px; display: flex; align-items: center; padding-left: 13px; background: linear-gradient(90deg, #f1f1f1, #fafafa 80%); font: 11px/16px "Open Sans", sans-serif; letter-spacing: -.2px; }
.m1 { width: 34px; } .m2 { width: 40.500px; } .m3 { width: 64.500px; } .m4 { width: 44px; } .m5 { width: 58px; }
.tools { height: 23px; display: flex; align-items: center; gap: 7px; padding: 0 3px; background: linear-gradient(#fbfbfb, #f0f0f0); border-bottom: 1px solid #c9c9c9; }
.tools svg { width: 14px; height: 14px; }
.tools .dd { width: 6px; height: 4px; margin: 0 -2.250px; }
.tools .sep { width: 1px; height: 14px; background: #ccc; margin: 0; }
.tools .sep + svg { margin-left: -1.500px; }
.tools-end { display: flex; gap: 1px; margin-left: auto; padding-right: 2px; }
.work { height: 502px; display: flex; background: #eee; }
.side { width: 202px; }
.pane { background: #eee; padding-left: 4px; border-top: 1px solid #ddd; }
.pane1 { height: 123px; padding-top: 7px; border-bottom: 4px solid #a5a5a5; }
.pane2 { padding-top: 7px; }
.side .group { width: 194px; letter-spacing: -.48px; }
.g-cool { height: 103px; }
.g-pos { height: 59px; }
.g-other { height: 39px; margin-top: 9px; }
.srow { display: flex; align-items: center; padding-left: 2px; }
.r1 { height: 16px; }
.r1 .cap { width: 59px; }
.r2 { height: 19px; }
.r2 .cooler { width: 55px; margin-left: 4px; }
.on-t { width: 25px; margin-left: 4px; } .off-t { margin-left: 6px; }
.r3 { height: 21px; }
.setto { width: 31px; margin-left: 1px; }
.w37 { width: 37px; } .cin { margin: 0 2px 0 2px; width: 19px; }
.mm { width: 10px; margin-left: 4px; }
.set { width: 40px; height: 19px; margin-left: 2px; }
.r4 { height: 28px; gap: 4px; }
.w68 { width: 68px; gap: 5px; } .w40 { width: 40px; }
.sidebar { width: 186px; height: 9px; margin: -1px 0 0 2px; }
.p1 { height: 15px; }
.p1:nth-child(2) { margin-top: 1px; }
.p2 { height: 17px; }
.pc { width: 77px; margin-left: 2px; }
.p2 .pc { letter-spacing: -.38px; }
.p1 span + span { letter-spacing: -.3px; }
.p2 .pc ~ span { letter-spacing: -.35px; }
.flip { width: 48px; margin-right: 3px; overflow: hidden; }
.r5 { height: 26px; gap: 6px; padding: 3px 0 0 4px; }
.w88 { width: 88px; gap: 4px; }
.center { width: 565px; border-left: 4px solid #a5a5a5; display: flex; flex-direction: column; }
.tabs { height: 22px; display: flex; justify-content: space-between; border-bottom: 1px solid #888; }
.tab { position: relative; width: 196px; height: 22px; margin-left: 3px; padding: 3px 0 0 24px; font: bold 10.500px/16px "Open Sans", sans-serif; letter-spacing: .22px; color: #111; }
.tab span { position: relative; }
.tabshape { position: absolute; left: 0; top: 2px; width: 196px; height: 20px; }
.tab-end { display: flex; align-items: center; gap: 7px; padding-right: 7px; }
.imgtools { height: 29px; margin: 3px 0 0 2px; padding: 0 0 0 5px; display: flex; align-items: center; gap: 3px; background: #696969; border: solid #555; border-width: 1px 0; }
.imgtools b { width: 22px; height: 22px; background: #ededed; border: 1px solid #f8f8f8; display: flex; align-items: center; justify-content: center; }
.imgtools .gap { margin-right: 7.500px; }
.imgtools svg { width: 14px; height: 14px; }
.viewer { height: 423px; margin: 2px 0 0 2px; background: #e3e3e3; border: 1px solid #888; padding-left: 66px; }
.image { height: 100%; background: #000; border-left: 1px solid #fff; }
.coords { height: 23px; border-top: 1px solid #ccc; background: #f0eeee; display: flex; align-items: center; font: 10.500px/14px "Open Sans", sans-serif; letter-spacing: .1px; padding: 3px 3px 0 4px; }
.coords span { height: 16px; border-right: 1px solid #bbb; margin-right: 4px; }
.c1 { width: 116px; } .c2 { width: 150px; } .c3 { width: 89px; }
.grip { width: 12px; height: 12px; color: #a5a5a5; }
.coords .grip { margin: 6px 0 0 auto; }
.phd { width: 208px; border-left: 4px solid #a5a5a5; }
.phd-body { height: 486px; padding: 466px 0 0 14px; overflow: hidden; letter-spacing: .2px; }
.sampling { font-weight: bold; font-style: italic; color: #111; margin-top: 1px; }
.full { font-weight: bold; }
.green { height: 23px; display: flex; align-items: center; background: #006400; color: #dbe8db; font: 10.500px/14px "Open Sans", sans-serif; letter-spacing: .05px; }
.gload { width: 138px; height: 14px; margin-left: 1px; border: 1px solid #ccc; background: radial-gradient(ellipse 65px 7px at 108px 9px, #3f9450, #8acb93 50%, #c5e0c8 80%, transparent), linear-gradient(#f0f0f0, #cacaca); }
.dl { width: 326px; margin-left: 4px; }
.cell { height: 17px; display: flex; align-items: center; border-left: 2px solid #a9c9a9; padding-left: 3px; gap: 2px; letter-spacing: -.2px; }
.cell svg { width: 14px; height: 14px; }
.dim { opacity: .3; } .semi { opacity: .75; }
.cell span { margin-right: 4px; }
.c-focus { width: 86px; } .c-target { width: 79px; } .c-target span { margin-right: 6px; } .c-scope { width: 102px; } .c-guider { width: 95px; } .c-rec { width: 74px; } .c-safe { width: 69px; }
.c-guider svg { width: 13px; }
.c-safe .grip { color: #b9d9b9; margin-top: 8px; width: 11px; height: 11px; }
.c-scope em { margin-left: 2px; }

/* dialog */
.dialog { left: 528px; top: 82px; width: 790px; height: 464px; border: 1px solid #444; border-radius: 6px 0 0 0; background: #d5e2f0; padding: 0 0 0 6px; }
.dtitle { height: 27px; margin-left: -6px; padding: 4px 0 0 8px; display: flex; align-items: center; border-radius: 5px 0 0 0; background: linear-gradient(#c3cfdd, #d5e2f0); color: #444b55; font: 10.500px/14px "Open Sans", sans-serif; letter-spacing: 0; }
.dtitle span { width: 706px; margin-left: 4px; }
.dbtn { width: 28px; height: 16px; border: 1px solid #7d9cbe; border-radius: 3px; padding-left: 8px; font-weight: bold; line-height: 14px; }
.dbody { height: 429px; background: #eee; padding: 7px 0 0 6px; }
.top { height: 211px; display: flex; }
.listcol { width: 173px; flex: none; }
.list { width: 166px; height: 180px; margin-top: -1px; border: 1px solid #999; background: #fff; display: flex; padding: 4px 0 0 4px; }
.items { width: 147px; flex: none; }
.item { height: 24.900px; display: flex; align-items: center; padding-left: 3px; border: 1px solid transparent; }
.item.sel { background: linear-gradient(#eef5fd, #d4e6fa); border-color: #a9cbec; border-radius: 2px 0 0 2px; }
.item svg { width: 12px; height: 12px; margin: 0 8px 0 7px; color: #000; }
.item span { letter-spacing: -.32px; }
.chk { width: 12px; height: 12px; flex: none; border: 1px solid #999; background: linear-gradient(135deg, #ddd, #f6f6f6); box-shadow: inset 0 0 0 1px #f6f6f6; }
.chk.on::before { content: "✓"; display: block; font: bold 11px/10px "DejaVu Sans", sans-serif; color: #365f9e; text-indent: 1px; }
.scroll { width: 13px; background: #efefef; margin: -4px 0 0; display: flex; flex-direction: column; align-items: center; }
.scroll svg { width: 6px; height: 4px; color: #555; }
.sup { transform: rotate(180deg); margin: 7px 0 6px; }
.scroll i { width: 13px; height: 14px; background: linear-gradient(90deg, #f4f4f4, #d5d5d5); border: 1px solid #999; border-radius: 2px; }
.sdown { margin-top: auto; margin-bottom: 6px; }
.lbtns { display: flex; margin: 5px 0 0 -1px; }
.lbtns .btn { width: 23px; height: 21px; flex: none; }
.lbtns svg { width: 13px; height: 13px; }
.b2 { margin-left: 8px; } .b3 { margin-left: 2px; } .b4 { margin-left: 6px; } .b5 { margin-left: 6px; } .b6 { margin-left: 7px; }
.midcol { width: 286px; flex: none; }
.midcol .group { width: 280px; }
.g-top { height: 124px; }
.g-bot { height: 73px; margin-top: 8px; }
.midcol .legend, .rightcol .legend { margin-left: 5px; }
.drow { height: 24.500px; display: flex; align-items: center; padding-left: 5px; }
.drow > svg, .erow > svg { width: 13px; height: 13px; }
.g-top .legend + div { margin-top: 1px; }
.dl1 { width: 57px; margin-left: 4px; flex: none; }
.field { width: 130px; height: 18px; flex: none; overflow: hidden; white-space: nowrap; background: #fff; border: 1px solid #e2e2e2; padding: 2px 0 0 2px; letter-spacing: -.13px; }
.ff { letter-spacing: -.74px; }
.browse { width: 60px; margin-left: 4px; height: 19px; letter-spacing: -.15px; }
.btn.half { width: 29px; height: 19px; margin-left: 4px; }
.btn.half + .half { margin-left: 2px; }
.half svg { width: 13px; height: 13px; }
.polaris { width: 194px; }
.trow { height: 18px; display: flex; align-items: center; padding-left: 3px; margin-top: 1px; }
.t2 { height: 19px; margin-top: 0; }
.trow svg { width: 14px; height: 14px; margin-right: 2px; }
.te { width: 128px; letter-spacing: -.16px; } .trow .rt { letter-spacing: -.34px; }
.prow { display: flex; align-items: center; height: 25px; padding-left: 4px; }
.big { width: 221px; height: 11px; margin-top: 4px; }
.pct { margin-left: 11px; font-size: 12px; letter-spacing: -.1px; }
.rightcol .group { width: 320px; }
.erow { height: 24.500px; display: flex; align-items: center; padding-left: 6px; }
.el { width: 62px; margin-left: 5px; }
.erow .combo { width: 144px; }
.dis { letter-spacing: -.18px; }
.dis span { margin-left: -1px; }
.tile { width: 20px; height: 20px; margin-left: 5px; border: 1px solid #33280f; border-radius: 2px; background: #6b4a0d; display: flex; align-items: center; justify-content: center; }
.tile + .tile { margin-left: 2px; }
.tile svg { width: 16px; height: 16px; }
.gr { background: #69646c; }
.expand { width: 67px; height: 9px; margin: 2px 0 0 115px; }
.orow { height: 20.500px; display: flex; align-items: center; padding-left: 6px; }
.orow svg { width: 13px; height: 13px; }
.o1 { height: 21px; }
.od { width: 145px; letter-spacing: -.1px; } .oe { letter-spacing: .2px; }
.ol { width: 69px; margin-left: 3px; letter-spacing: -.28px; }
.w39 { width: 39px; margin-right: 18px; }
.ot { margin-left: 6px; letter-spacing: -.28px; }

.grid { width: 761px; display: grid; grid-template-columns: 67px 75px 33px 57px 61px 78px 61px 55px 54px 139px 80px; grid-template-rows: 27px 30px repeat(4, 29.250px); border: solid #aaa; border-width: 1px 0 0 1px; }
.grid > div { border: solid #b5b5b5; border-width: 0 1px 1px 0; display: flex; align-items: center; overflow: hidden; }
.grid > .hd { justify-content: center; font-weight: bold; font-size: 11px; color: #111; letter-spacing: -.2px; border-bottom: 1px solid #888; }
.hd.prog { grid-column: span 2; padding-right: 20px; }
.hd.hicons { gap: 5px; } .hicons svg { width: 13px; height: 14px; }
.ev { padding-left: 2px; gap: 2px; }
.ev svg { width: 13px; height: 13px; } .ev .ar { width: 11px; height: 22px; }
.ev span { margin-left: 3px; }
.grid > .ev, .grid > .ic { padding-bottom: 2px; }
.ic { gap: 5px; padding-left: 2px; }
.stack { display: flex; flex-direction: column; gap: 1px; }
.stack svg { width: 14px; height: 14px; color: #777; }
.stack .dt { width: 14px; height: 6px; }
.ic > svg { width: 14px; height: 14px; margin: 8px 0 0 -1px; }
.grid > .rn { justify-content: center; padding-bottom: 2px; }
.grid .combo { height: 20px; padding: 0 4px 0 3px; }
.grid > .cc { padding-left: 3px; padding-bottom: 3px; }
.cy .combo { width: 51px; } .cf .combo { width: 54px; } .cb .combo { width: 49px; }
.grid .plain { width: 72px; height: 19px; background: #fff; border-color: #e2e2e2; border-radius: 0; padding: 0 4px 0 1px; }
.ce .plain { width: 54px; }
.grid .spin { width: 48px; height: 19px; }
.pg .bar { width: 133px; height: 11px; }
.grid > .ct { justify-content: center; padding: 0 20px 3px 0; letter-spacing: -.1px; }
.foot { display: flex; align-items: center; height: 21px; margin: 6px 0 0 -1px; }
.add { width: 116px; height: 21px; justify-content: flex-start; padding-left: 3px; letter-spacing: -.1px; }
.add svg { width: 13px; height: 13px; } .add span { width: 79px; margin-left: 7px; } .add .dd { width: 6px; height: 4px; }
.sw, .cp { width: 14px; height: 14px; }
.sw { margin-left: 58px; } .el1 { width: 43px; margin-left: 6px; } .el2 { width: 50px; }
.fbar { width: 154px; margin-top: 3px; }
.cp { margin-left: 13px; } .re1 { width: 59px; margin-left: 5px; } .re2 { width: 97px; letter-spacing: -.25px; }
.psq { width: 120px; height: 21px; flex: none; justify-content: flex-start; padding-left: 6px; gap: 5px; letter-spacing: -.34px; }
.psq svg { width: 12px; height: 12px; }
```
FILE: app.js
```js
const icon = (id, cls = '') => `<svg class="${cls}"><use href="#${id}"/></svg>`;
const targets = [
  ['bias-start', 'play', true], ['dark-start', 'pause', true], ['NGC 925-1', 'pause', false],
  ['NGC925-6', 'check', false], ['NGC925-2', 'pause', false], ['NGC925-3', 'check', false], ['NGC925-5', 'pause', false]
];
document.getElementById('targets').innerHTML = targets.map(([name, ic, on], n) =>
  `<div class="item${n ? '' : ' sel'}"><i class="chk${on ? ' on' : ''}"></i>${icon(ic)}<span>${name}</span></div>`).join('');

const events = [
  ['Bias', '2x2', '21', '3/21', 15], ['Light', '1x1', '1', '0/1', 0], ['Light', '1x1', '1', '0/1', 0],
  ['Light', '1x1', '1', '0/1', 0], ['Light', '1x1', '1', '0/1', 0]
];
const combo = (text, cls = '') => `<div class="combo ${cls}"><span>${text}</span>${icon('tri', 'dd')}</div>`;
const stack = id => `<div class="stack">${icon('dots', 'dt')}${icon(id)}</div>`;
document.getElementById('events').insertAdjacentHTML('beforeend', events.map(([type, bin, rep, count, pct], n) => `
  <div class="ev">${icon(n ? 'dotx' : 'play')}${icon('gear')}${icon('arrows', 'ar')}<span>${n + 1}</span></div>
  <div class="ic">${stack('pause')}${stack('scopeg')}${stack('scriptg')}${icon('bubble')}</div>
  <div class="rn"><i class="chk${n ? '' : ' on'}"></i></div>
  <div class="cc cy">${combo(type)}</div>
  <div class="cc cf">${combo('None')}</div>
  <div class="cc">${combo('', 'plain')}</div>
  <div class="cc ce">${combo('0', 'plain')}</div>
  <div class="cc cb">${combo(bin)}</div>
  <div class="cc"><div class="spin">${rep}<b></b></div></div>
  <div class="cc pg"><div class="bar"><i style="width:${pct}%"></i></div></div>
  <div class="ct">${count}</div>`).join(''));
```
